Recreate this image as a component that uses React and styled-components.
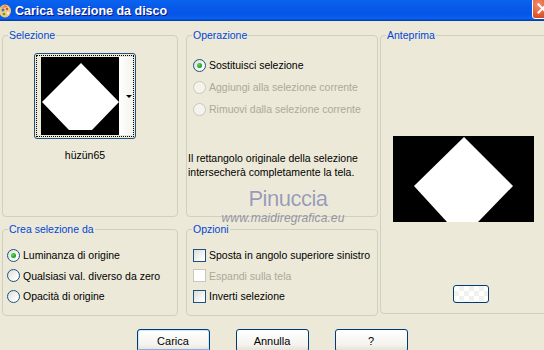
import styled, { createGlobalStyle } from 'styled-components';

const GlobalStyle = createGlobalStyle`
  html, body { margin: 0; padding: 0; background: #ECE9D8; }
`;

const Window = styled.div`
  position: relative;
  width: 544px;
  height: 350px;
  overflow: hidden;
  background: #ECE9D8;
  font-family: "Liberation Sans", Arial, sans-serif;
  font-size: 10.5px;
  color: #000;
`;

const TitleBar = styled.div`
  height: 21px;
  display: flex;
  align-items: center;
  overflow: hidden;
  background: linear-gradient(to bottom, #0A64F0 0%, #0758E6 40%, #0556E8 70%, #0A5FF2 88%, #0046B8 96%, #003A99 100%);
`;

const TitleIcon = styled.svg`
  width: 13px;
  height: 14px;
  margin: 0 3px 0 -1px;
  flex: none;
`;

const TitleText = styled.span`
  flex: 1;
  color: #fff;
  font-family: "Liberation Sans", Arial, sans-serif;
  font-weight: bold;
  font-size: 12.5px;
  text-shadow: 1px 1px #0A1883;
`;

const CloseButton = styled.div`
  width: 21px;
  height: 21px;
  margin: -5px -9px 0 0;
  flex: none;
  box-sizing: border-box;
  border: 1px solid #fff;
  border-radius: 3px;
  background: radial-gradient(circle at 30% 30%, #F0906C, #E2582F 55%, #C23B16);
  display: flex;
  align-items: center;
  justify-content: center;
`;

const Body = styled.div`
  padding: 8px 0 0 2px;
`;

const Panels = styled.div`
  display: grid;
  grid-template-columns: 176px 200px 170px;
  grid-template-rows: 188px 93px;
  row-gap: 6px;
`;

const Group = styled.fieldset`
  margin: 0 0 0 ${p => p.$offset || 0}px;
  padding: 0;
  min-width: 0;
  border: 1px solid #D0D0BF;
  border-radius: 4px;
  grid-row: ${p => (p.$span ? '1 / span 2' : 'auto')};
  grid-column: ${p => p.$col || 'auto'};
  margin-bottom: ${p => (p.$span ? 2 : 0)}px;
`;

const Legend = styled.legend`
  color: #0046D5;
  padding: 0 1px;
  margin-left: 5px;
  line-height: 13px;
`;

const ThumbColumn = styled.div`
  width: 102px;
  margin: 11px 0 0 31px;
  display: flex;
  flex-direction: column;
  align-items: center;
`;

const Thumb = styled.div`
  width: 102px;
  box-sizing: border-box;
  border: 1px solid #1C5180;
  border-radius: 3px;
  padding: 1px;
`;

const FocusRing = styled.div`
  border: 1px dotted #000;
  display: flex;
  padding: 1px 0 1px 4px;
`;

const ThumbImage = styled.svg`
  width: 78px;
  height: 78px;
  display: block;
`;

const DropStrip = styled.div`
  flex: 1;
  display: flex;
  align-items: center;
  justify-content: flex-end;
  padding-right: 1px;
  background: linear-gradient(to right, #FFFFFF, #F3F2EC);
`;

const Arrow = styled.span`
  width: 0;
  height: 0;
  border-left: 3px solid transparent;
  border-right: 3px solid transparent;
  border-top: 3px solid #000;
`;

const Caption = styled.div`
  margin-top: 10px;
  line-height: 13px;
`;

const OptionList = styled.div`
  padding: ${p => p.$top}px 0 0 ${p => p.$left}px;
  display: flex;
  flex-direction: column;
`;

const Option = styled.label`
  height: ${p => p.$h}px;
  display: flex;
  align-items: center;
  gap: 3px;
  white-space: nowrap;
  color: ${p => (p.$disabled ? '#ACA899' : '#000')};
`;

const RadioMark = styled.span`
  width: 13px;
  height: 13px;
  box-sizing: border-box;
  border-radius: 50%;
  border: 1px solid ${p => (p.$disabled ? '#CAC8BB' : '#1C5180')};
  background: ${p => (p.$disabled ? '#F4F3EE' : 'linear-gradient(135deg, #DCDCD7, #FFFFFF 80%)')};
  display: flex;
  align-items: center;
  justify-content: center;
  flex: none;

  &::after {
    content: '';
    display: ${p => (p.$checked ? 'block' : 'none')};
    width: 5px;
    height: 5px;
    border-radius: 50%;
    background: radial-gradient(circle at 35% 35%, #5BE157, #21A121 60%, #1A8A1A);
  }
`;

const CheckMark = styled.span`
  width: 13px;
  height: 13px;
  box-sizing: border-box;
  border: 1px solid ${p => (p.$disabled ? '#CAC8BB' : '#1C5180')};
  background: ${p => (p.$disabled ? '#FFFFFF' : 'linear-gradient(135deg, #DCDCD7, #FFFFFF 85%)')};
  flex: none;
`;

const Note = styled.p`
  margin: 31px 0 0 1px;
  line-height: 14px;
  white-space: nowrap;
`;

const Preview = styled.svg`
  display: block;
  width: 141px;
  height: 86px;
  margin: 94px 0 0 12px;
`;

const SwatchButton = styled.div`
  width: 36px;
  height: 18px;
  box-sizing: border-box;
  margin: 63px 0 0 72px;
  border: 1px solid #003C74;
  border-radius: 3px;
  background:
    conic-gradient(#F1F1EE 25%, #FFFFFF 0 50%, #F1F1EE 0 75%, #FFFFFF 0) 0 0 / 10px 10px,
    #F8F8F5;
`;

const ButtonRow = styled.div`
  display: flex;
  justify-content: center;
  gap: 26px;
  margin-top: 13px;
  padding-right: 2px;
`;

const Button = styled.button`
  width: 73px;
  height: 23px;
  border: 1px solid #003C74;
  border-radius: 3px;
  font-family: "Liberation Sans", Arial, sans-serif;
  font-size: 11px;
  color: #000;
  padding: 0;
  background: linear-gradient(to bottom, #FFFFFF, #F4F3EE 70%, #E3E0D4);
  box-shadow: ${p => (p.$default ? 'inset 0 0 0 1px #CEE7FF, inset 0 -1px 0 1px #89ADE4' : 'none')};
`;

const Watermark = styled.div`
  position: absolute;
  left: 222px;
  top: 186px;
  display: flex;
  flex-direction: column;
  align-items: center;
  width: 122px;
  pointer-events: none;
`;

const MarkName = styled.span`
  font-family: "Liberation Sans", Arial, sans-serif;
  font-size: 22px;
  line-height: 26px;
  color: #9A9BB3;
  letter-spacing: -0.5px;
  text-shadow: 0 0 1px #fff;
  margin-left: 10px;
`;

const MarkUrl = styled.span`
  font-family: "Liberation Sans", Arial, sans-serif;
  font-style: italic;
  font-size: 12px;
  line-height: 12px;
  letter-spacing: 0.1px;
  color: #8B8C9E;
  opacity: 0.9;
`;

function App() {
  return (
    <Window>
      <GlobalStyle />
      <TitleBar>
        <TitleIcon viewBox="0 0 13 14">
          <ellipse cx="6" cy="7" rx="6" ry="6.5" fill="#F5C77A" />
          <path d="M2 4 L6 1 L9 3 Z" fill="#E7892E" />
          <circle cx="4" cy="6" r="1.4" fill="#3C6FD8" />
          <circle cx="8" cy="5" r="1.2" fill="#D84A2A" />
          <circle cx="5" cy="10" r="1.3" fill="#4BA43C" />
          <circle cx="9" cy="9" r="1.1" fill="#FFFFFF" />
        </TitleIcon>
        <TitleText>Carica selezione da disco</TitleText>
        <CloseButton>
          <svg width="11" height="11" viewBox="0 0 11 11">
            <path d="M1.5 1.5 L9.5 9.5 M9.5 1.5 L1.5 9.5" stroke="#fff" strokeWidth="2" strokeLinecap="square" />
          </svg>
        </CloseButton>
      </TitleBar>

      <Body>
        <Panels>
          <Group>
            <Legend>Selezione</Legend>
            <ThumbColumn>
              <Thumb>
                <FocusRing>
                  <ThumbImage viewBox="0 0 78 78">
                    <rect width="78" height="78" fill="#000" />
                    <polygon points="40,6 78,45 51,73 28,73 1,45" fill="#fff" />
                  </ThumbImage>
                  <DropStrip>
                    <Arrow />
                  </DropStrip>
                </FocusRing>
              </Thumb>
              <Caption>hüzün65</Caption>
            </ThumbColumn>
          </Group>

          <Group $offset={8}>
            <Legend>Operazione</Legend>
            <OptionList $top={12} $left={6}>
              <Option $h={22}>
                <RadioMark $checked />
                Sostituisci selezione
              </Option>
              <Option $h={22} $disabled>
                <RadioMark $disabled />
                Aggiungi alla selezione corrente
              </Option>
              <Option $h={22} $disabled>
                <RadioMark $disabled />
                Rimuovi dalla selezione corrente
              </Option>
            </OptionList>
            <Note>
              Il rettangolo originale della selezione
              <br />
              intersecherà completamente la tela.
            </Note>
          </Group>

          <Group $offset={2} $span $col="3">
            <Legend>Anteprima</Legend>
            <Preview viewBox="0 0 141 86">
              <rect width="141" height="86" fill="#000" />
              <polygon points="71,1 120,50 85,86 54,86 21,50" fill="#fff" />
            </Preview>
            <SwatchButton />
          </Group>

          <Group>
            <Legend>Crea selezione da</Legend>
            <OptionList $top={9} $left={4}>
              <Option $h={20.5}>
                <RadioMark $checked />
                Luminanza di origine
              </Option>
              <Option $h={20.5}>
                <RadioMark />
                Qualsiasi val. diverso da zero
              </Option>
              <Option $h={20.5}>
                <RadioMark />
                Opacità di origine
              </Option>
            </OptionList>
          </Group>

          <Group $offset={8}>
            <Legend>Opzioni</Legend>
            <OptionList $top={9} $left={6}>
              <Option $h={20.5}>
                <CheckMark />
                Sposta in angolo superiore sinistro
              </Option>
              <Option $h={20.5} $disabled>
                <CheckMark $disabled />
                Espandi sulla tela
              </Option>
              <Option $h={20.5}>
                <CheckMark />
                Inverti selezione
              </Option>
            </OptionList>
          </Group>
        </Panels>

        <ButtonRow>
          <Button $default>Carica</Button>
          <Button>Annulla</Button>
          <Button>?</Button>
        </ButtonRow>
      </Body>

      <Watermark>
        <MarkName>Pinuccia</MarkName>
        <MarkUrl>www.maidiregrafica.eu</MarkUrl>
      </Watermark>
    </Window>
  );
}

export default App;
